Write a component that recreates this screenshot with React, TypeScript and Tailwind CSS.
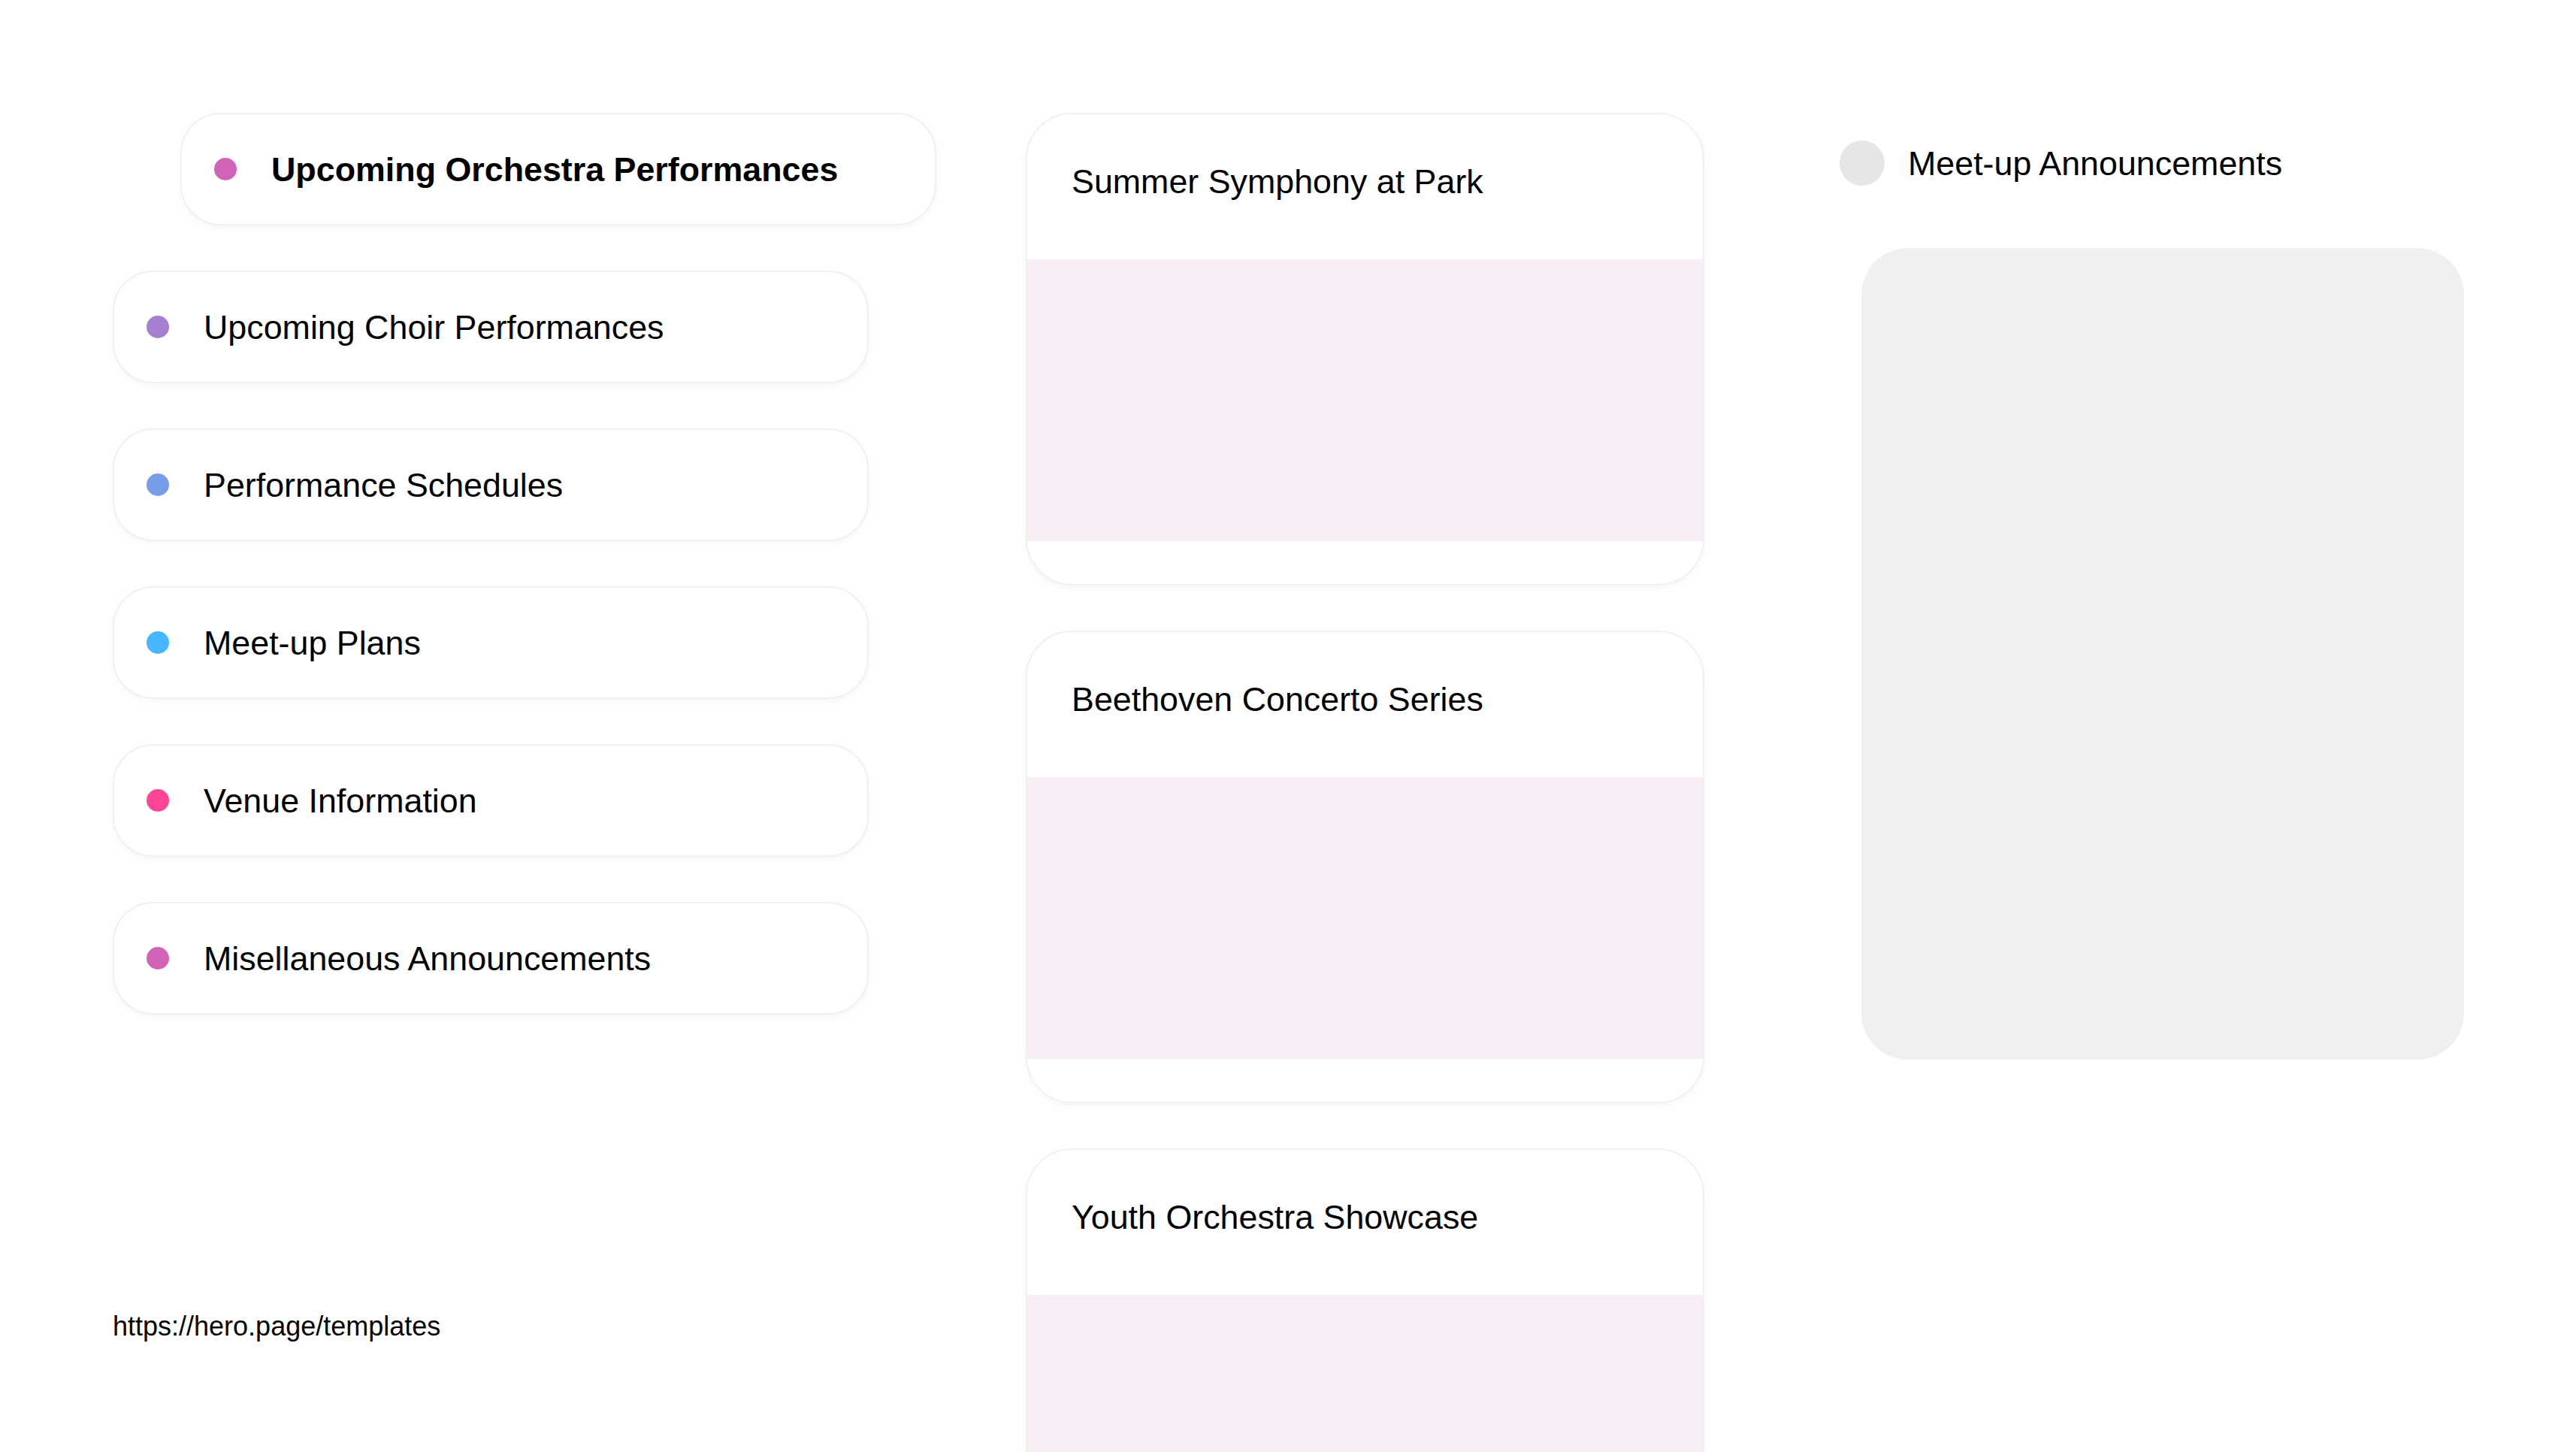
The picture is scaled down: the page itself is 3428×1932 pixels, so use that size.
const categories = [
  { label: "Upcoming Orchestra Performances", color: "bg-[#d264b8]", active: true },
  { label: "Upcoming Choir Performances", color: "bg-[#a77fd0]" },
  { label: "Performance Schedules", color: "bg-[#789de8]" },
  { label: "Meet-up Plans", color: "bg-[#45b6ff]" },
  { label: "Venue Information", color: "bg-[#ff4596]" },
  { label: "Misellaneous Announcements", color: "bg-[#d264b8]" },
];

const events = ["Summer Symphony at Park", "Beethoven Concerto Series", "Youth Orchestra Showcase"];

function CategoryItem({ label, color, active }: { label: string; color: string; active?: boolean }) {
  return (
    <div
      className={
        "flex h-[150px] w-[1006px] shrink-0 items-center gap-[46px] rounded-[54px] border-2 border-[#f1f1f1] bg-white pl-[43px] shadow-[0_3px_10px_rgba(0,0,0,0.04)] " +
        (active ? "ml-[90px]" : "")
      }
    >
      <span className={"h-[30px] w-[30px] shrink-0 rounded-full " + color} />
      <span className={"text-[44.8px] leading-[52px] text-black " + (active ? "font-bold" : "font-normal")}>
        {label}
      </span>
    </div>
  );
}

function EventCard({ title }: { title: string }) {
  return (
    <div className="flex h-[629px] w-[903px] shrink-0 flex-col overflow-hidden rounded-[62px] border-2 border-[#f1f1f1] bg-white shadow-[0_3px_10px_rgba(0,0,0,0.04)]">
      <div className="h-[193px] shrink-0 pl-[59px] pt-[63px]">
        <h3 className="text-[44.8px] font-normal leading-[52px] text-black">{title}</h3>
      </div>
      <div className="h-[375px] shrink-0 bg-[#f9eef6]" />
    </div>
  );
}

export default function App() {
  return (
    <div
      className="flex h-[1932px] w-[3428px] overflow-hidden bg-white pl-[150px] pt-[150px]"
      style={{ fontFamily: '"Liberation Sans", Arial, sans-serif' }}
    >
      {/* Left: categories + footer link */}
      <div className="flex w-[1004px] shrink-0 flex-col">
        <div className="flex flex-col gap-[60px]">
          {categories.map((c) => (
            <CategoryItem key={c.label} {...c} />
          ))}
        </div>
        <p className="mt-[394px] text-[36px] leading-[41px] text-black">https://hero.page/templates</p>
      </div>

      {/* Middle: event cards */}
      <div className="ml-[211px] flex w-[903px] shrink-0 flex-col gap-[60px]">
        {events.map((e) => (
          <EventCard key={e} title={e} />
        ))}
      </div>

      {/* Right: announcements */}
      <div className="ml-[209px] flex w-[802px] shrink-0 flex-col">
        <div className="-ml-[29px] mt-[37px] flex h-[60px] items-center gap-[31px]">
          <span className="h-[60px] w-[60px] shrink-0 rounded-full bg-[#e6e6e6]" />
          <span className="text-[44.8px] leading-[52px] text-black">Meet-up Announcements</span>
        </div>
        <div className="mt-[83px] h-[1080px] w-[802px] rounded-[62px] bg-[#f0f0f0]" />
      </div>
    </div>
  );
}
